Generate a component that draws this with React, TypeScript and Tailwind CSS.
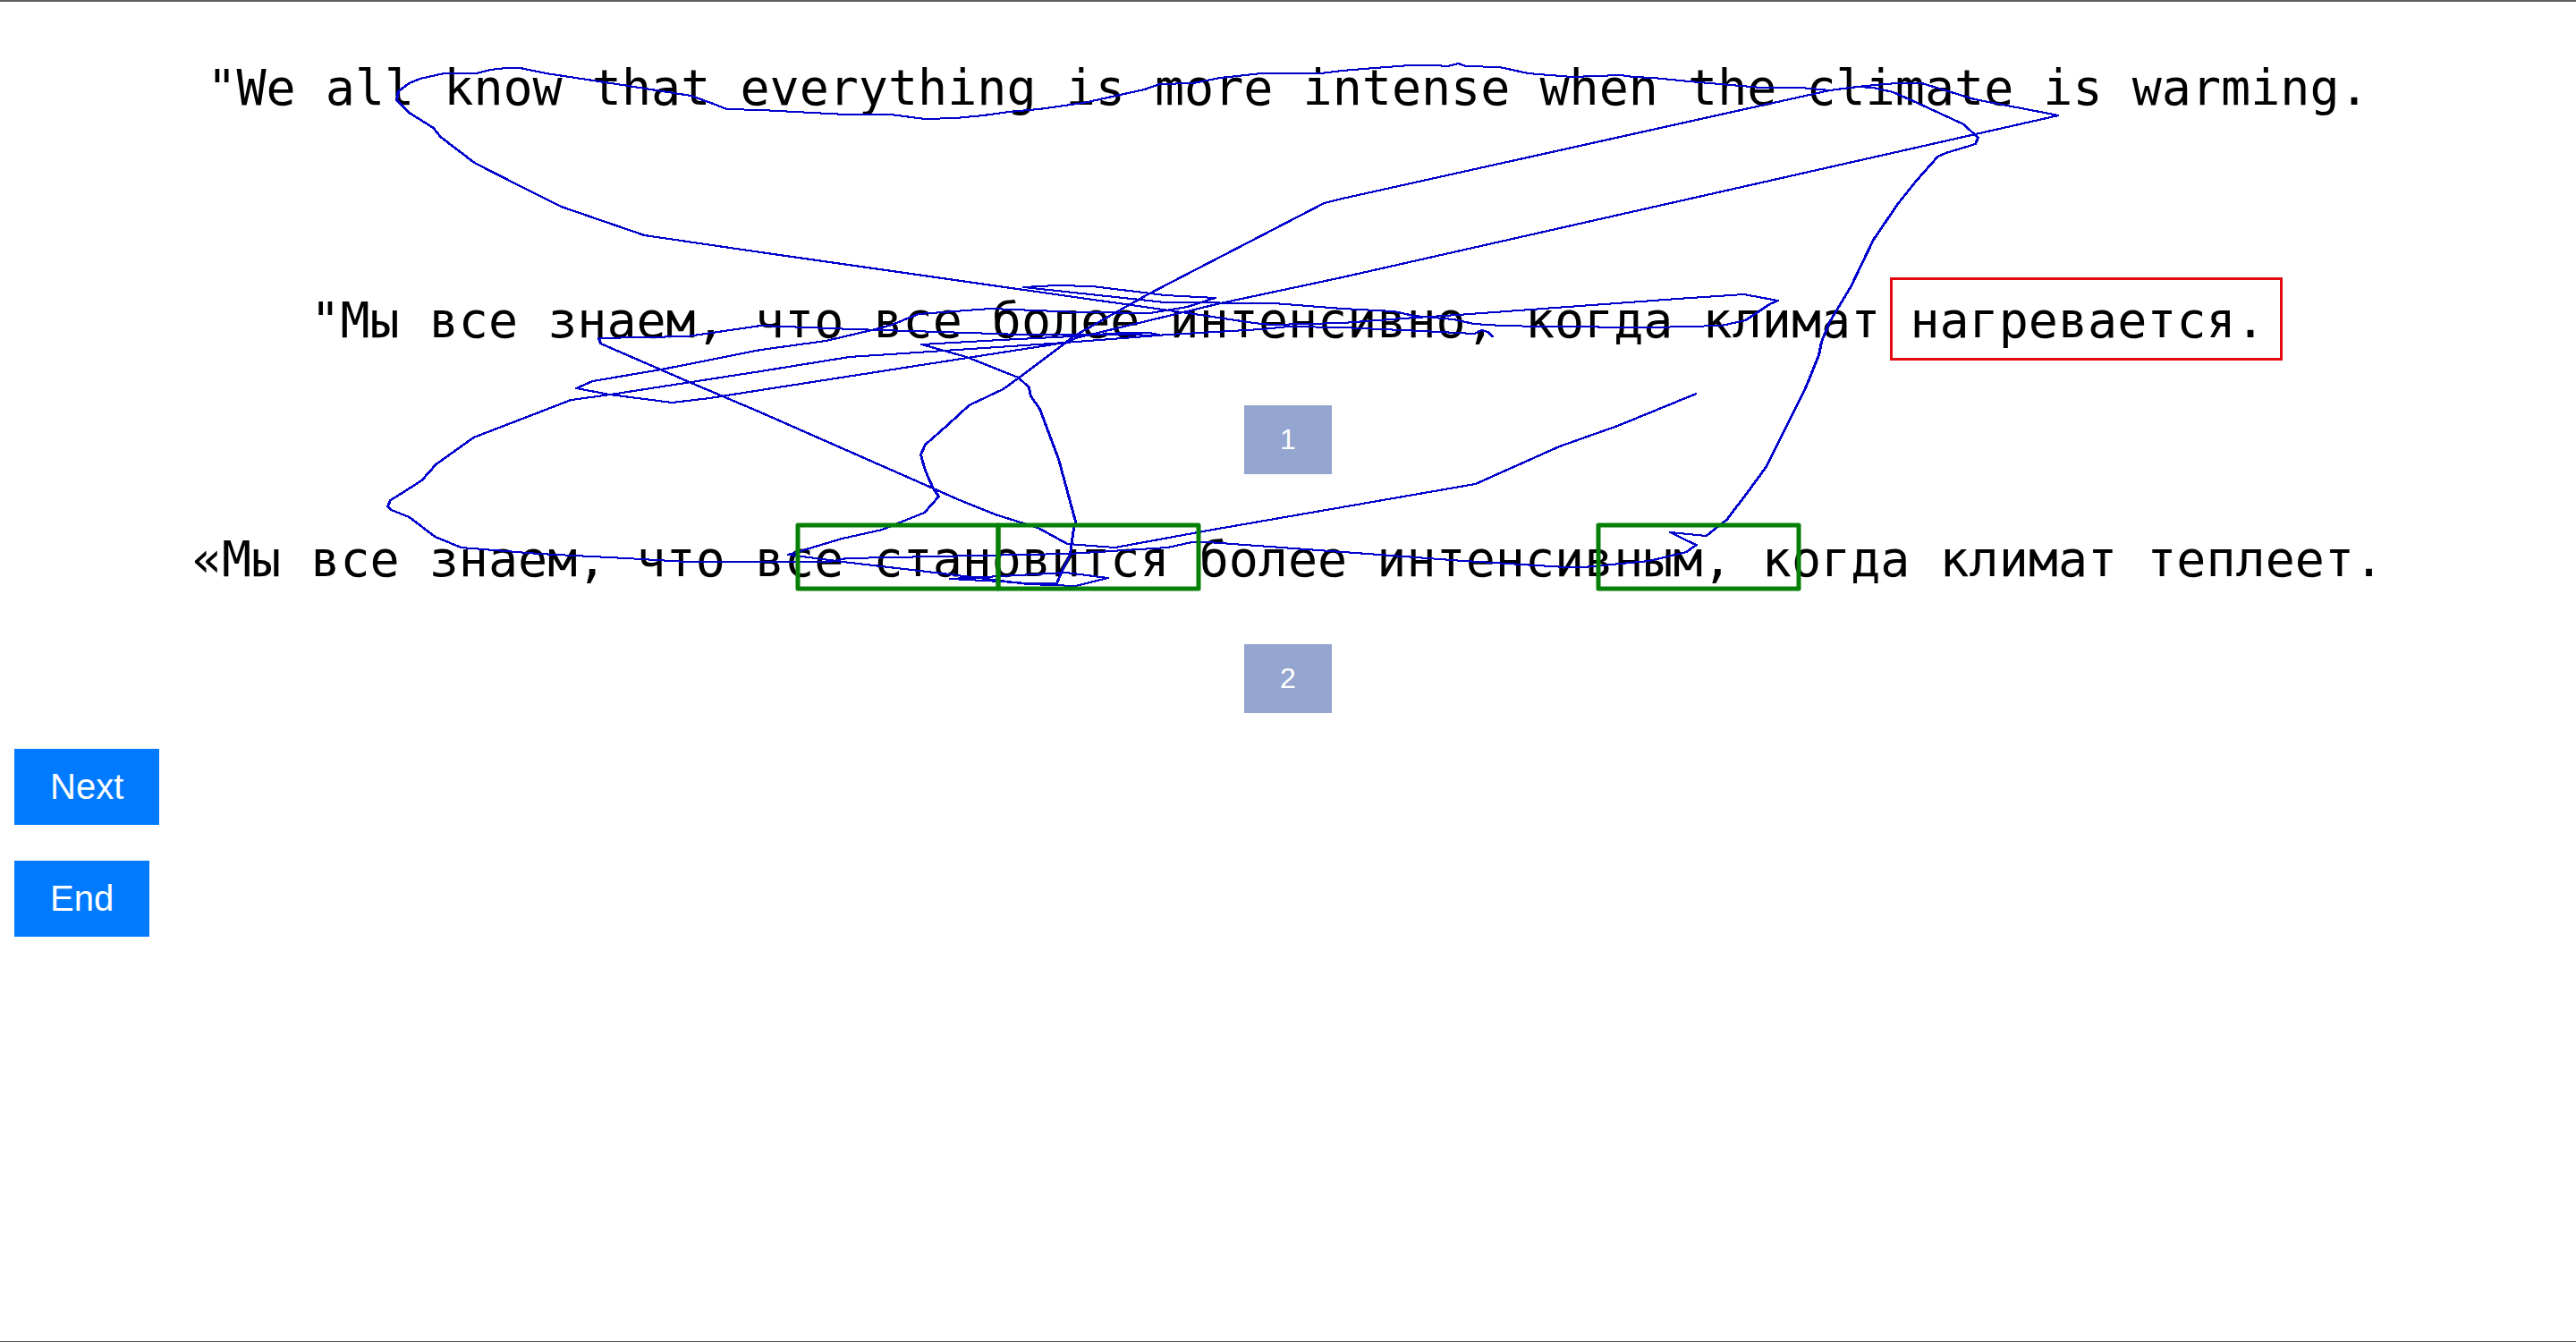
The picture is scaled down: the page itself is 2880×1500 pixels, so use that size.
import type { ReactNode } from 'react';

const TRACES: string[] = [
  // first pass over the right-hand side, dropping into the lower sentence
  '2301,129 2207,111 2148,93 2120,93 2085,96 2045,101 1500,222 1480,227 1281,330 1198,377 1191,383 1139,422 1121,435 1083,453 1059,475 1034,497 1029,508 1033,523 1037,533 1043,546 1049,555 1033,573 1003,585 986,592 941,602 881,620 942,628 1053,641 1118,649 1149,653 1202,655 1238,646 1191,640 1137,643 1062,647 1118,650 1149,652 1181,652 1187,638 1196,620 1200,590 1202,583 1183,513 1162,457 1152,443 1150,433 1138,422 1080,399 1030,385 1118,380 1198,376 1254,372 1285,372 1298,375',
  // the long loop around all three sentences
  '2301,129 1500,310 1364,339 1202,378 1190,383 850,436 793,445 751,450 681,441 644,434 662,426 739,413 850,391 923,381 978,368 997,363 1026,351 1041,350 1066,348 1107,345 1207,349 1285,350 1327,343 1358,333 1302,330 1221,320 1180,319 1144,321 1302,338 1424,339 1500,345 1558,348 1580,353 1625,357 1647,362 1679,364 1723,365 1848,366 1924,364 1951,358 1978,340 1987,336 1949,329 1875,334 1629,352 1567,356 1500,361 1422,363 1401,361 1335,351 1144,324 850,282 720,263 627,231 581,208 530,182 492,153 484,143 457,126 443,112 445,102 457,93 469,88 496,82 532,82 548,78 565,76 581,76 610,82 689,94 772,107 797,116 812,122 850,123 945,128 995,128 1034,133 1068,132 1099,129 1128,125 1161,122 1211,115 1279,100 1296,94 1333,93 1364,87 1410,82 1476,82 1500,79 1536,76 1576,73 1603,73 1618,74 1630,71 1638,74 1676,75 1708,82 1757,86 1811,84 1826,86 1848,87 1888,91 1969,98 2013,98 2045,101 2076,97 2094,98 2116,103 2143,115 2195,139 2211,154 2208,161 2175,171 2166,175 2142,202 2122,227 2094,268 2069,320 2045,360 2036,382 2033,397 2018,434 1995,480 1974,522 1952,552 1930,581 1907,599 1867,595 1885,604 1896,609 1885,617 1843,627 1770,634 1750,634 1636,627 1542,620 1350,606 1332,606 1305,612 1194,619 946,624 927,628 850,628 767,628 700,624 602,619 515,612 486,600 457,578 437,570 433,566 436,559 446,553 471,537 487,519 529,489 638,447 682,441 850,415 949,399 1190,383 1306,374 1410,368 1440,365 1500,366 1589,370 1648,373 1656,369 1663,371 1669,377',
  // the exit past the first choice button
  '1896,440 1808,476 1743,499 1649,541 1350,593 1246,612 1193,608 1160,590 1112,575 1070,558 1043,546 850,461 770,427 671,384 669,378 768,376 850,364 954,368 1082,372 1140,374 1254,374 1298,375',
];

// the pen is wider than it is tall, so each trace is stroked twice side by side
const PEN_STEPS = ['translate(0 0)', 'translate(1 0)'];

const MARKS = [
  { x: 892, y: 587 },
  { x: 1116, y: 587 },
  { x: 1787, y: 587 },
];

function GazeTrace() {
  return (
    <svg
      aria-hidden="true"
      width="2880"
      height="1500"
      viewBox="0 0 2880 1500"
      className="pointer-events-none absolute -top-[2px] left-1/2 max-w-none -translate-x-1/2"
      fill="none"
    >
      {PEN_STEPS.map((step) => (
        <g
          key={step}
          transform={step}
          stroke="#0000cd"
          strokeWidth="2"
          strokeLinejoin="round"
          shapeRendering="crispEdges"
        >
          {TRACES.map((points) => (
            <polyline key={points.slice(0, 40)} points={points} />
          ))}
        </g>
      ))}
      <g stroke="#068006" strokeWidth="5" strokeLinejoin="round">
        {MARKS.map((m) => (
          <rect key={m.x} x={m.x} y={m.y} width="224" height="71" />
        ))}
      </g>
    </svg>
  );
}

function Sentence({ children }: { children: ReactNode }) {
  return (
    <p className="text-center font-['Consolas','DejaVu_Sans_Mono',monospace] text-[55px] leading-[70px] whitespace-nowrap text-black">
      {children}
    </p>
  );
}

function ChoiceButton({ label }: { label: string }) {
  return (
    <button type="button" className="bg-[#94a6d0] px-10 py-5 text-[32px] leading-[37px] text-white">
      {label}
    </button>
  );
}

function ActionButton({ label }: { label: string }) {
  return (
    <button type="button" className="bg-[#007bff] px-10 py-5 text-[40px] leading-[45px] text-white">
      {label}
    </button>
  );
}

export default function App() {
  return (
    <main className="relative min-h-screen overflow-hidden border-t-2 border-b border-t-[#605e5e] border-b-[#505050] bg-white pt-[61px] font-['Liberation_Sans',Arial,sans-serif]">
      <Sentence>"We all know that everything is more intense when the climate is warming.</Sentence>
      <div className="mt-[190px] flex flex-col items-center gap-15">
        <Sentence>
          "Мы все знаем, что все более интенсивно, когда климат{' '}
          <span className="-mr-[19px] -ml-[22px] border-[3px] border-[#e30b0f] pt-[13px] pr-4 pb-[10px] pl-[19px]">
            нагревается.
          </span>
        </Sentence>
        <ChoiceButton label="1" />
        <Sentence>«Мы все знаем, что все становится более интенсивным, когда климат теплеет.</Sentence>
        <ChoiceButton label="2" />
      </div>
      <div className="mt-10 flex flex-col items-start gap-10 pl-4">
        <ActionButton label="Next" />
        <ActionButton label="End" />
      </div>
      <GazeTrace />
    </main>
  );
}
